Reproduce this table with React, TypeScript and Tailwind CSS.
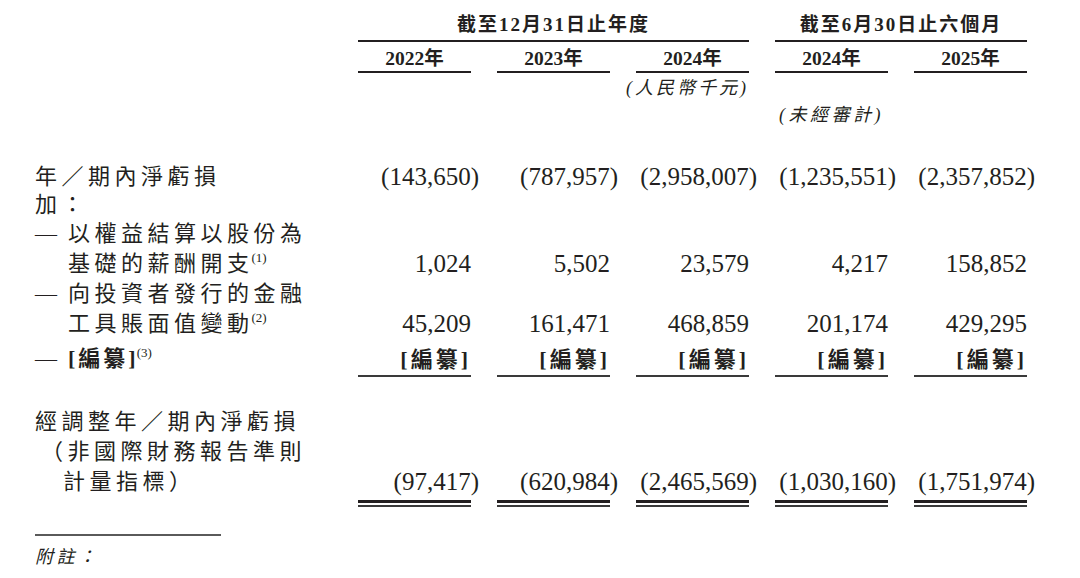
import type { ReactNode } from "react";

// negative figures: closing paren hangs past the column edge
const Neg = ({ v }: { v: string }) => (
  <>
    ({v}
    <span className="-mr-[8px]">)</span>
  </>
);

const Sup = ({ n }: { n: number }) => (
  <span className="relative -top-[9px] -ml-[2px] text-[13px] leading-none tracking-normal font-normal">({n})</span>
);

const Dash = () => <span className="inline-block w-[33px] leading-none tracking-normal">—</span>;

const Cells: React.FC<{ values: ReactNode[]; className?: string }> = ({ values, className = "" }) => (
  <div className="flex gap-[26px]">
    {values.map((v, i) => (
      <div key={i} className={"w-[113px] shrink-0 text-right whitespace-nowrap " + className}>
        {v}
      </div>
    ))}
  </div>
);

const Row: React.FC<{ label: ReactNode; values?: ReactNode[]; className?: string; lead?: string }> = ({
  label,
  values,
  className = "",
  lead = "leading-[30px]",
}) => (
  <div className={"flex items-end " + className}>
    <div className={"w-[323px] shrink-0 text-[22px] tracking-[4.5px] whitespace-nowrap " + lead}>{label}</div>
    {values && <Cells values={values} className={"text-[25px] " + lead} />}
  </div>
);

const Rule = ({ className }: { className: string }) => (
  <div className="flex gap-[26px] pl-[323px]">
    {[0, 1, 2, 3, 4].map((i) => (
      <div key={i} className={"w-[113px] " + className} />
    ))}
  </div>
);

const Redacted = () => <span className="font-bold text-[22px] leading-none tracking-[3px]">[編纂]</span>;

export default function App() {
  return (
    <div className="w-[1080px] h-[578px] overflow-hidden bg-white pl-[35px] text-[#231f20] font-['Liberation_Serif','Noto_Sans_CJK_TC',serif]">
      {/* period headers */}
      <div className="flex gap-[26px] pl-[323px] pt-[13px] font-bold text-[19px] leading-[24px]">
        <div className="w-[391px] text-center tracking-[2px] pb-[3px] border-b-2 border-[#231f20]">截至12月31日止年度</div>
        <div className="w-[252px] text-center tracking-[2px] pb-[3px] border-b-2 border-[#231f20]">截至6月30日止六個月</div>
      </div>
      <div className="flex gap-[26px] pl-[323px] pt-[5px] font-bold text-[19.5px] leading-[24px]">
        {["2022", "2023", "2024", "2024", "2025"].map((y, i) => (
          <div key={i} className="w-[113px] text-center border-b-2 border-[#231f20]">
            {y}年
          </div>
        ))}
      </div>
      <div className="flex gap-[26px] pl-[323px] mt-[3px] italic text-[18px] leading-[24px] tracking-[3px]">
        <div className="w-[113px]" />
        <div className="w-[113px]" />
        <div className="w-[113px] flex justify-end whitespace-nowrap -mr-[3px]">(人民幣千元)</div>
      </div>
      <div className="flex gap-[26px] pl-[323px] mt-[3px] italic text-[18px] leading-[24px] tracking-[3.5px]">
        <div className="w-[113px]" />
        <div className="w-[113px]" />
        <div className="w-[113px]" />
        <div className="w-[113px] flex justify-center whitespace-nowrap">(未經審計)</div>
      </div>

      {/* body */}
      <Row
        className="mt-[36px]"
        lead="leading-[28px]"
        label="年／期內淨虧損"
        values={[<Neg v="143,650" />, <Neg v="787,957" />, <Neg v="2,958,007" />, <Neg v="1,235,551" />, <Neg v="2,357,852" />]}
      />
      <Row lead="leading-[28px]" label="加：" />
      <Row
        label={
          <>
            <div>
              <Dash />
              以權益結算以股份為
            </div>
            <div className="pl-[33px]">
              基礎的薪酬開支
              <Sup n={1} />
            </div>
          </>
        }
        values={["1,024", "5,502", "23,579", "4,217", "158,852"]}
      />
      <Row
        label={
          <>
            <div>
              <Dash />
              向投資者發行的金融
            </div>
            <div className="pl-[33px]">
              工具賬面值變動
              <Sup n={2} />
            </div>
          </>
        }
        values={["45,209", "161,471", "468,859", "201,174", "429,295"]}
      />
      <Row
        className="mt-[5px]"
        label={
          <div>
            <Dash />
            <span className="font-bold leading-none tracking-[3px]">[編纂]</span>
            <Sup n={3} />
          </div>
        }
        values={[<Redacted />, <Redacted />, <Redacted />, <Redacted />, <Redacted />]}
      />
      <div className="mt-[1px]">
        <Rule className="h-[2px] bg-[#3a3a3a]" />
      </div>

      <Row
        className="mt-[30px]"
        label={
          <>
            <div>經調整年／期內淨虧損</div>
            <div className="pl-[6px]">（非國際財務報告準則</div>
            <div className="pl-[28px]">計量指標）</div>
          </>
        }
        values={[<Neg v="97,417" />, <Neg v="620,984" />, <Neg v="2,465,569" />, <Neg v="1,030,160" />, <Neg v="1,751,974" />]}
      />
      <div className="mt-[3px]">
        <Rule className="h-[3px] bg-[#231f20]" />
      </div>
      <div className="mt-[2px]">
        <Rule className="h-[2px] bg-[#3a3a3a]" />
      </div>

      {/* footnote */}
      <div className="mt-[27px] w-[186px] h-[2px] bg-[#5a5a5a]" />
      <div className="mt-[9px] italic text-[18px] leading-[24px] tracking-[3.5px]">附註：</div>
    </div>
  );
}
